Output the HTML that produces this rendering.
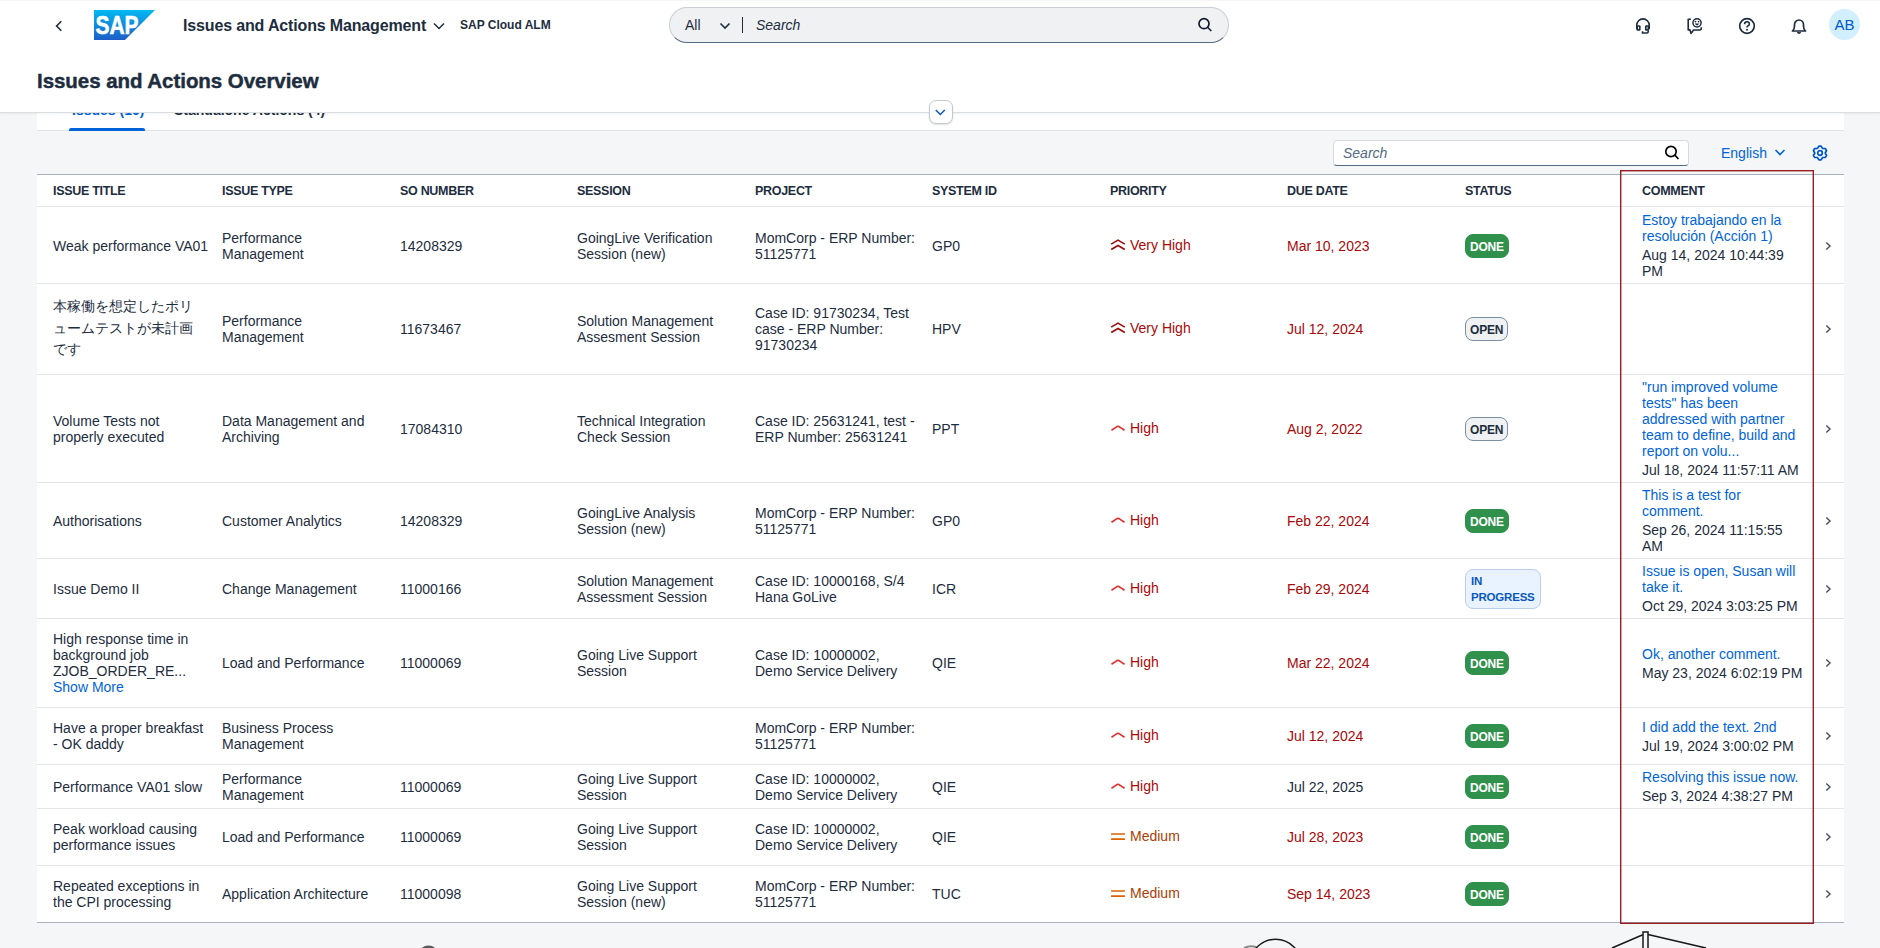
<!DOCTYPE html>
<html><head><meta charset="utf-8">
<style>
*{box-sizing:border-box;margin:0;padding:0}
html,body{width:1880px;height:948px;overflow:hidden}
body{background:#f5f6f7;font-family:"Liberation Sans",sans-serif;color:#1d2d3e;position:relative;font-size:14px}
.abs{position:absolute}
/* shell header */
#hdr{position:absolute;left:0;top:0;width:1880px;height:113px;background:#fff;box-shadow:0 1px 2px rgba(0,0,0,.06);z-index:5;border-bottom:1px solid #dcdfe2}
#tabs{position:absolute;left:37px;top:96px;width:1807px;height:35px;background:#fff;border-bottom:1px solid #e2e4e7;z-index:2}
#tabs .tt{position:absolute;top:6px;font-size:14px;font-weight:bold}
#tabs .ul{position:absolute;left:32px;top:32px;width:76px;height:2.5px;background:#0064d9;border-radius:2px 2px 0 0}
#toolbar{position:absolute;left:37px;top:131px;width:1807px;height:43px;background:#f5f6f7}
#table{position:absolute;left:37px;top:174px;width:1807px;height:749px;background:#fff;border-top:1px solid #a8b2bd;border-bottom:1px solid #a8b2bd}
.hrow{position:absolute;left:37px;top:175px;width:1807px;height:32px;border-bottom:1px solid #e5e5e5}
.hc{position:absolute;top:184px;font-size:12.5px;font-weight:bold;line-height:14px;color:#1d2d3e;letter-spacing:-0.3px}
.row{position:absolute;left:37px;width:1807px;border-bottom:1px solid #e5e5e5}
.c{position:absolute;display:flex;align-items:center;white-space:nowrap}
.t{line-height:16px;font-size:14px}
.jp{line-height:21.5px;font-size:13.5px;color:#1d2d3e}
.lk{color:#0064d9}
.dt{margin-top:3px}
.red{color:#aa0808}
.pri{display:flex;align-items:center}
.pri{position:relative;top:-1px}
.pri .pi{margin-right:4px;position:relative;top:-2px}
.pr span{color:#aa0808}
.pm span{color:#a93e00}
.bd{font-weight:bold;font-size:12px;border-radius:8px;padding:0 4px;line-height:22px;height:24px;letter-spacing:-0.2px}
.done{background:#30914c;color:#fff;border:1px solid #30914c;padding-top:1px}
.open{background:#eff1f2;color:#1d2d3e;border:1px solid #788fa6;padding-top:1px}
.prog{background:#e8f3ff;color:#0a58bd;border:1px solid #b9cdec;height:40px;line-height:16px;padding:3px 5px;width:76px;font-size:11.5px}
#redbox{position:absolute;left:1620px;top:170px;width:194px;height:754px;z-index:4}
</style></head>
<body>
<div id="hdr">
  <div class="abs" style="left:0;top:0;width:1880px;height:1px;background:#f6f6f6"></div>
  <svg class="abs" style="left:52px;top:17px" width="14" height="18" viewBox="0 0 14 18"><path d="M9.3 4.2 L4.6 9 L9.3 13.8" fill="none" stroke="#1d2d3e" stroke-width="1.6"/></svg>
  <svg class="abs" style="left:94px;top:10px" width="61" height="30" viewBox="0 0 61 30">
    <defs><linearGradient id="sg" x1="0" y1="0" x2="0" y2="1"><stop offset="0" stop-color="#00b9f2"/><stop offset="1" stop-color="#1e5ec8"/></linearGradient></defs>
    <path d="M0 0 H61 L31 30 H0 Z" fill="url(#sg)"/>
    <text x="1.5" y="24.3" font-family="Liberation Sans" font-weight="bold" font-size="26.5" fill="#fff" stroke="#fff" stroke-width="0.6" textLength="43" lengthAdjust="spacingAndGlyphs">SAP</text>
  </svg>
  <div class="abs" style="left:183px;top:16px;font-size:16px;font-weight:bold;line-height:20px;letter-spacing:-0.15px">Issues and Actions Management</div>
  <svg class="abs" style="left:432px;top:19px" width="14" height="14" viewBox="0 0 14 14"><path d="M2 4.5 L7 9.5 L12 4.5" fill="none" stroke="#1d2d3e" stroke-width="1.5"/></svg>
  <div class="abs" style="left:460px;top:17px;font-size:12px;font-weight:bold;line-height:16px">SAP Cloud ALM</div>
  <!-- search -->
  <div class="abs" style="left:669px;top:7px;width:560px;height:36px;border-radius:18px;background:#eff1f2;border:1px solid #c9ced3;border-bottom:1px solid #556b82"></div>
  <div class="abs" style="left:685px;top:17px;font-size:14px;line-height:16px">All</div>
  <svg class="abs" style="left:718px;top:20px" width="14" height="12" viewBox="0 0 14 12"><path d="M2.5 3.5 L7 8 L11.5 3.5" fill="none" stroke="#1d2d3e" stroke-width="1.6"/></svg>
  <div class="abs" style="left:742px;top:17px;width:1px;height:16px;background:#1d2d3e"></div>
  <div class="abs" style="left:756px;top:17px;font-size:14px;line-height:16px;font-style:italic;color:#1d2d3e">Search</div>
  <svg class="abs" style="left:1196px;top:16px" width="18" height="18" viewBox="0 0 18 18"><circle cx="8" cy="7.7" r="5" fill="none" stroke="#0f1a2b" stroke-width="1.7"/><path d="M11.6 11.3 L15.3 15" stroke="#0f1a2b" stroke-width="1.6"/></svg>
  <!-- right icons -->
  <svg class="abs" style="left:1633px;top:16px" width="20" height="20" viewBox="0 0 20 20"><path d="M3.8 13 V9.1 A6.2 6.2 0 0 1 16.2 9.1 V13" fill="none" stroke="#1d2d3e" stroke-width="1.6"/><rect x="4.2" y="10" width="2.6" height="3.9" rx=".5" fill="none" stroke="#1d2d3e" stroke-width="1.7"/><rect x="12.8" y="10" width="2.6" height="3.9" rx=".5" fill="none" stroke="#1d2d3e" stroke-width="1.7"/><path d="M15.2 14.5 V15.8 Q15.2 17 14 17 H9.5 V15.2" fill="none" stroke="#1d2d3e" stroke-width="1.6"/></svg>
  <svg class="abs" style="left:1684px;top:15px" width="22" height="22" viewBox="0 0 22 22"><path d="M6.9 4.2 H4.2 V14.9 H6 L6.9 18.4 L9.6 15 H16 Q17.4 15 17.4 12.3" fill="none" stroke="#1d2d3e" stroke-width="1.6" stroke-linejoin="round"/><circle cx="13" cy="7.85" r="4.1" fill="none" stroke="#1d2d3e" stroke-width="1.5"/><circle cx="11.5" cy="6.6" r=".85" fill="#1d2d3e"/><circle cx="14.5" cy="6.6" r=".85" fill="#1d2d3e"/><path d="M10.6 8.6 Q13 12.2 15.4 8.6 Z" fill="#1d2d3e"/></svg>
  <svg class="abs" style="left:1736px;top:15px" width="22" height="22" viewBox="0 0 22 22"><circle cx="11" cy="11" r="7.3" fill="none" stroke="#1d2d3e" stroke-width="1.7"/><path d="M8.6 9.2 Q8.6 6.7 11 6.7 Q13.4 6.7 13.4 9 Q13.4 10.4 11.8 11 Q11 11.4 11 12.6" fill="none" stroke="#1d2d3e" stroke-width="1.6"/><circle cx="11" cy="14.8" r="1" fill="#1d2d3e"/></svg>
  <svg class="abs" style="left:1788px;top:15px" width="22" height="22" viewBox="0 0 22 22"><path d="M4.5 16 Q6.5 14.5 6.5 11 V9.5 A4.5 4.5 0 0 1 15.5 9.5 V11 Q15.5 14.5 17.5 16 Z" fill="none" stroke="#1d2d3e" stroke-width="1.7" stroke-linejoin="round"/><path d="M9.3 17.3 Q11 19 12.7 17.3" fill="#1d2d3e" stroke="#1d2d3e" stroke-width="1.5"/></svg>
  <div class="abs" style="left:1829px;top:9px;width:31px;height:31px;border-radius:50%;background:#d1efff;color:#0057d2;font-size:15px;line-height:31px;text-align:center">AB</div>
  <!-- page title -->
  <div class="abs" style="left:37px;top:69px;font-size:20.5px;font-weight:bold;line-height:24px;color:#1d2d3e;-webkit-text-stroke:0.45px #1d2d3e;letter-spacing:-0.05px">Issues and Actions Overview</div>
</div>

<div id="tabs">
  <div class="tt" style="left:35px;color:#0064d9">Issues (10)</div>
  <div class="tt" style="left:137px;color:#1d2d3e">Standalone Actions (4)</div>
  <div class="ul"></div>
</div>
<!-- collapse button -->
<div class="abs" style="left:929px;top:100px;width:24px;height:24px;background:#fff;border:1px solid #c4c9ce;border-radius:7px;box-shadow:0 1px 2px rgba(0,0,0,.12);z-index:6"></div>
<svg class="abs" style="left:933px;top:105px;z-index:7" width="14" height="14" viewBox="0 0 14 14"><path d="M2.8 5 L7.3 9.5 L11.8 5" fill="none" stroke="#0a56c0" stroke-width="1.5"/></svg>

<div id="toolbar">
  <div class="abs" style="left:1296px;top:9px;width:356px;height:26px;background:#fff;border:1px solid #d5dadd;border-bottom:1px solid #556b82;border-radius:4px"></div>
  <div class="abs" style="left:1306px;top:14px;font-size:14px;line-height:16px;font-style:italic;color:#556b82">Search</div>
  <svg class="abs" style="left:1626px;top:13px" width="18" height="18" viewBox="0 0 18 18"><circle cx="8" cy="7.5" r="5.2" fill="none" stroke="#000" stroke-width="1.7"/><path d="M11.8 11.2 L15.5 15" stroke="#000" stroke-width="1.7"/></svg>
  <div class="abs" style="left:1684px;top:14px;font-size:14px;line-height:16px;color:#0064d9">English</div>
  <svg class="abs" style="left:1736px;top:16px" width="14" height="12" viewBox="0 0 14 12"><path d="M2.5 3 L7 7.5 L11.5 3" fill="none" stroke="#0064d9" stroke-width="1.6"/></svg>
  <svg class="abs" style="left:1772.5px;top:11.8px" width="20" height="20" viewBox="0 0 20 20"><path d="M7.40 5.50 L8.90 3.09 L11.10 3.09 L12.60 5.50 L15.44 5.59 L16.54 7.49 L15.20 10.00 L16.54 12.51 L15.44 14.41 L12.60 14.50 L11.10 16.91 L8.90 16.91 L7.40 14.50 L4.56 14.41 L3.46 12.51 L4.80 10.00 L3.46 7.49 L4.56 5.59 Z" fill="none" stroke="#0058c6" stroke-width="1.7" stroke-linejoin="round"/><circle cx="10" cy="10" r="2.3" fill="none" stroke="#0058c6" stroke-width="1.7"/></svg>
</div>

<div id="table"></div>
<div class="hrow"></div>
<div class="hc" style="left:53px">ISSUE TITLE</div>
<div class="hc" style="left:222px">ISSUE TYPE</div>
<div class="hc" style="left:400px">SO NUMBER</div>
<div class="hc" style="left:577px">SESSION</div>
<div class="hc" style="left:755px">PROJECT</div>
<div class="hc" style="left:932px">SYSTEM ID</div>
<div class="hc" style="left:1110px">PRIORITY</div>
<div class="hc" style="left:1287px">DUE DATE</div>
<div class="hc" style="left:1465px">STATUS</div>
<div class="hc" style="left:1642px">COMMENT</div>

<div class="row" style="top:207px;height:77px"></div>
<div class="c " style="left:53px;top:208px;height:76px"><div class="t">Weak performance VA01</div></div>
<div class="c " style="left:222px;top:208px;height:76px"><div class="t">Performance<br>Management</div></div>
<div class="c " style="left:400px;top:208px;height:76px"><div class="t">14208329</div></div>
<div class="c " style="left:577px;top:208px;height:76px"><div class="t">GoingLive Verification<br>Session (new)</div></div>
<div class="c " style="left:755px;top:208px;height:76px"><div class="t">MomCorp - ERP Number:<br>51125771</div></div>
<div class="c " style="left:932px;top:208px;height:76px"><div class="t">GP0</div></div>
<div class="c " style="left:1110px;top:208px;height:76px"><div class="t pr pri"><svg class="pi" width="16" height="16" viewBox="0 0 16 16"><path d="M1.2 9.1 L8 5.1 L14.8 9.1 M1.2 14.5 L8 10.5 L14.8 14.5" fill="none" stroke="#9c0a0a" stroke-width="1.6"/></svg><span>Very High</span></div></div>
<div class="c " style="left:1287px;top:208px;height:76px"><div class="t red">Mar 10, 2023</div></div>
<div class="c " style="left:1465px;top:208px;height:76px"><div class="bd done">DONE</div></div>
<div class="c " style="left:1642px;top:207px;height:76px"><div class="t"><div class="lk">Estoy trabajando en la<br>resolución (Acción 1)</div><div class="dt">Aug 14, 2024 10:44:39<br>PM</div></div></div>
<div class="c " style="left:1823px;top:208px;height:76px"><svg width="10" height="12" viewBox="0 0 10 12"><path d="M3.3 2.4 L7.1 6 L3.3 9.6" fill="none" stroke="#424d59" stroke-width="1.35"/></svg></div>
<div class="row" style="top:283px;height:92px"></div>
<div class="c " style="left:53px;top:283px;height:91px"><div class="jp">本稼働を想定したポリ<br>ュームテストが未計画<br>です</div></div>
<div class="c " style="left:222px;top:283px;height:91px"><div class="t">Performance<br>Management</div></div>
<div class="c " style="left:400px;top:283px;height:91px"><div class="t">11673467</div></div>
<div class="c " style="left:577px;top:283px;height:91px"><div class="t">Solution Management<br>Assesment Session</div></div>
<div class="c " style="left:755px;top:283px;height:91px"><div class="t">Case ID: 91730234, Test<br>case - ERP Number:<br>91730234</div></div>
<div class="c " style="left:932px;top:283px;height:91px"><div class="t">HPV</div></div>
<div class="c " style="left:1110px;top:283px;height:91px"><div class="t pr pri"><svg class="pi" width="16" height="16" viewBox="0 0 16 16"><path d="M1.2 9.1 L8 5.1 L14.8 9.1 M1.2 14.5 L8 10.5 L14.8 14.5" fill="none" stroke="#9c0a0a" stroke-width="1.6"/></svg><span>Very High</span></div></div>
<div class="c " style="left:1287px;top:283px;height:91px"><div class="t red">Jul 12, 2024</div></div>
<div class="c " style="left:1465px;top:283px;height:91px"><div class="bd open">OPEN</div></div>
<div class="c " style="left:1823px;top:283px;height:91px"><svg width="10" height="12" viewBox="0 0 10 12"><path d="M3.3 2.4 L7.1 6 L3.3 9.6" fill="none" stroke="#424d59" stroke-width="1.35"/></svg></div>
<div class="row" style="top:374px;height:109px"></div>
<div class="c " style="left:53px;top:375px;height:108px"><div class="t">Volume Tests not<br>properly executed</div></div>
<div class="c " style="left:222px;top:375px;height:108px"><div class="t">Data Management and<br>Archiving</div></div>
<div class="c " style="left:400px;top:375px;height:108px"><div class="t">17084310</div></div>
<div class="c " style="left:577px;top:375px;height:108px"><div class="t">Technical Integration<br>Check Session</div></div>
<div class="c " style="left:755px;top:375px;height:108px"><div class="t">Case ID: 25631241, test -<br>ERP Number: 25631241</div></div>
<div class="c " style="left:932px;top:375px;height:108px"><div class="t">PPT</div></div>
<div class="c " style="left:1110px;top:375px;height:108px"><div class="t pr pri"><svg class="pi" width="16" height="16" viewBox="0 0 16 16"><path d="M1.5 12.2 L7 8.6 Q8 8 9 8.6 L14.5 12.2" fill="none" stroke="#e0312f" stroke-width="1.7"/></svg><span>High</span></div></div>
<div class="c " style="left:1287px;top:375px;height:108px"><div class="t red">Aug 2, 2022</div></div>
<div class="c " style="left:1465px;top:375px;height:108px"><div class="bd open">OPEN</div></div>
<div class="c " style="left:1642px;top:374px;height:108px"><div class="t"><div class="lk">"run improved volume<br>tests" has been<br>addressed with partner<br>team to define, build and<br>report on volu...</div><div class="dt">Jul 18, 2024 11:57:11 AM</div></div></div>
<div class="c " style="left:1823px;top:375px;height:108px"><svg width="10" height="12" viewBox="0 0 10 12"><path d="M3.3 2.4 L7.1 6 L3.3 9.6" fill="none" stroke="#424d59" stroke-width="1.35"/></svg></div>
<div class="row" style="top:482px;height:77px"></div>
<div class="c " style="left:53px;top:483px;height:76px"><div class="t">Authorisations</div></div>
<div class="c " style="left:222px;top:483px;height:76px"><div class="t">Customer Analytics</div></div>
<div class="c " style="left:400px;top:483px;height:76px"><div class="t">14208329</div></div>
<div class="c " style="left:577px;top:483px;height:76px"><div class="t">GoingLive Analysis<br>Session (new)</div></div>
<div class="c " style="left:755px;top:483px;height:76px"><div class="t">MomCorp - ERP Number:<br>51125771</div></div>
<div class="c " style="left:932px;top:483px;height:76px"><div class="t">GP0</div></div>
<div class="c " style="left:1110px;top:483px;height:76px"><div class="t pr pri"><svg class="pi" width="16" height="16" viewBox="0 0 16 16"><path d="M1.5 12.2 L7 8.6 Q8 8 9 8.6 L14.5 12.2" fill="none" stroke="#e0312f" stroke-width="1.7"/></svg><span>High</span></div></div>
<div class="c " style="left:1287px;top:483px;height:76px"><div class="t red">Feb 22, 2024</div></div>
<div class="c " style="left:1465px;top:483px;height:76px"><div class="bd done">DONE</div></div>
<div class="c " style="left:1642px;top:482px;height:76px"><div class="t"><div class="lk">This is a test for<br>comment.</div><div class="dt">Sep 26, 2024 11:15:55<br>AM</div></div></div>
<div class="c " style="left:1823px;top:483px;height:76px"><svg width="10" height="12" viewBox="0 0 10 12"><path d="M3.3 2.4 L7.1 6 L3.3 9.6" fill="none" stroke="#424d59" stroke-width="1.35"/></svg></div>
<div class="row" style="top:558px;height:61px"></div>
<div class="c " style="left:53px;top:559px;height:60px"><div class="t">Issue Demo II</div></div>
<div class="c " style="left:222px;top:559px;height:60px"><div class="t">Change Management</div></div>
<div class="c " style="left:400px;top:559px;height:60px"><div class="t">11000166</div></div>
<div class="c " style="left:577px;top:559px;height:60px"><div class="t">Solution Management<br>Assessment Session</div></div>
<div class="c " style="left:755px;top:559px;height:60px"><div class="t">Case ID: 10000168, S/4<br>Hana GoLive</div></div>
<div class="c " style="left:932px;top:559px;height:60px"><div class="t">ICR</div></div>
<div class="c " style="left:1110px;top:559px;height:60px"><div class="t pr pri"><svg class="pi" width="16" height="16" viewBox="0 0 16 16"><path d="M1.5 12.2 L7 8.6 Q8 8 9 8.6 L14.5 12.2" fill="none" stroke="#e0312f" stroke-width="1.7"/></svg><span>High</span></div></div>
<div class="c " style="left:1287px;top:559px;height:60px"><div class="t red">Feb 29, 2024</div></div>
<div class="c " style="left:1465px;top:559px;height:60px"><div class="bd prog">IN<br>PROGRESS</div></div>
<div class="c " style="left:1642px;top:558px;height:60px"><div class="t"><div class="lk">Issue is open, Susan will<br>take it.</div><div class="dt">Oct 29, 2024 3:03:25 PM</div></div></div>
<div class="c " style="left:1823px;top:559px;height:60px"><svg width="10" height="12" viewBox="0 0 10 12"><path d="M3.3 2.4 L7.1 6 L3.3 9.6" fill="none" stroke="#424d59" stroke-width="1.35"/></svg></div>
<div class="row" style="top:618px;height:90px"></div>
<div class="c " style="left:53px;top:618px;height:89px"><div class="t">High response time in<br>background job<br>ZJOB_ORDER_RE...<br><span class="lk">Show More</span></div></div>
<div class="c " style="left:222px;top:618px;height:89px"><div class="t">Load and Performance</div></div>
<div class="c " style="left:400px;top:618px;height:89px"><div class="t">11000069</div></div>
<div class="c " style="left:577px;top:618px;height:89px"><div class="t">Going Live Support<br>Session</div></div>
<div class="c " style="left:755px;top:618px;height:89px"><div class="t">Case ID: 10000002,<br>Demo Service Delivery</div></div>
<div class="c " style="left:932px;top:618px;height:89px"><div class="t">QIE</div></div>
<div class="c " style="left:1110px;top:618px;height:89px"><div class="t pr pri"><svg class="pi" width="16" height="16" viewBox="0 0 16 16"><path d="M1.5 12.2 L7 8.6 Q8 8 9 8.6 L14.5 12.2" fill="none" stroke="#e0312f" stroke-width="1.7"/></svg><span>High</span></div></div>
<div class="c " style="left:1287px;top:618px;height:89px"><div class="t red">Mar 22, 2024</div></div>
<div class="c " style="left:1465px;top:618px;height:89px"><div class="bd done">DONE</div></div>
<div class="c " style="left:1642px;top:619px;height:89px"><div class="t"><div class="lk">Ok, another comment.</div><div class="dt">May 23, 2024 6:02:19 PM</div></div></div>
<div class="c " style="left:1823px;top:618px;height:89px"><svg width="10" height="12" viewBox="0 0 10 12"><path d="M3.3 2.4 L7.1 6 L3.3 9.6" fill="none" stroke="#424d59" stroke-width="1.35"/></svg></div>
<div class="row" style="top:707px;height:58px"></div>
<div class="c " style="left:53px;top:707px;height:57px"><div class="t">Have a proper breakfast<br>- OK daddy</div></div>
<div class="c " style="left:222px;top:707px;height:57px"><div class="t">Business Process<br>Management</div></div>
<div class="c " style="left:755px;top:707px;height:57px"><div class="t">MomCorp - ERP Number:<br>51125771</div></div>
<div class="c " style="left:1110px;top:707px;height:57px"><div class="t pr pri"><svg class="pi" width="16" height="16" viewBox="0 0 16 16"><path d="M1.5 12.2 L7 8.6 Q8 8 9 8.6 L14.5 12.2" fill="none" stroke="#e0312f" stroke-width="1.7"/></svg><span>High</span></div></div>
<div class="c " style="left:1287px;top:707px;height:57px"><div class="t red">Jul 12, 2024</div></div>
<div class="c " style="left:1465px;top:707px;height:57px"><div class="bd done">DONE</div></div>
<div class="c " style="left:1642px;top:708px;height:57px"><div class="t"><div class="lk">I did add the text. 2nd</div><div class="dt">Jul 19, 2024 3:00:02 PM</div></div></div>
<div class="c " style="left:1823px;top:707px;height:57px"><svg width="10" height="12" viewBox="0 0 10 12"><path d="M3.3 2.4 L7.1 6 L3.3 9.6" fill="none" stroke="#424d59" stroke-width="1.35"/></svg></div>
<div class="row" style="top:764px;height:45px"></div>
<div class="c " style="left:53px;top:765px;height:44px"><div class="t">Performance VA01 slow</div></div>
<div class="c " style="left:222px;top:765px;height:44px"><div class="t">Performance<br>Management</div></div>
<div class="c " style="left:400px;top:765px;height:44px"><div class="t">11000069</div></div>
<div class="c " style="left:577px;top:765px;height:44px"><div class="t">Going Live Support<br>Session</div></div>
<div class="c " style="left:755px;top:765px;height:44px"><div class="t">Case ID: 10000002,<br>Demo Service Delivery</div></div>
<div class="c " style="left:932px;top:765px;height:44px"><div class="t">QIE</div></div>
<div class="c " style="left:1110px;top:765px;height:44px"><div class="t pr pri"><svg class="pi" width="16" height="16" viewBox="0 0 16 16"><path d="M1.5 12.2 L7 8.6 Q8 8 9 8.6 L14.5 12.2" fill="none" stroke="#e0312f" stroke-width="1.7"/></svg><span>High</span></div></div>
<div class="c " style="left:1287px;top:765px;height:44px"><div class="t ">Jul 22, 2025</div></div>
<div class="c " style="left:1465px;top:765px;height:44px"><div class="bd done">DONE</div></div>
<div class="c " style="left:1642px;top:764px;height:44px"><div class="t"><div class="lk">Resolving this issue now.</div><div class="dt">Sep 3, 2024 4:38:27 PM</div></div></div>
<div class="c " style="left:1823px;top:765px;height:44px"><svg width="10" height="12" viewBox="0 0 10 12"><path d="M3.3 2.4 L7.1 6 L3.3 9.6" fill="none" stroke="#424d59" stroke-width="1.35"/></svg></div>
<div class="row" style="top:808px;height:58px"></div>
<div class="c " style="left:53px;top:808px;height:57px"><div class="t">Peak workload causing<br>performance issues</div></div>
<div class="c " style="left:222px;top:808px;height:57px"><div class="t">Load and Performance</div></div>
<div class="c " style="left:400px;top:808px;height:57px"><div class="t">11000069</div></div>
<div class="c " style="left:577px;top:808px;height:57px"><div class="t">Going Live Support<br>Session</div></div>
<div class="c " style="left:755px;top:808px;height:57px"><div class="t">Case ID: 10000002,<br>Demo Service Delivery</div></div>
<div class="c " style="left:932px;top:808px;height:57px"><div class="t">QIE</div></div>
<div class="c " style="left:1110px;top:808px;height:57px"><div class="t pm pri"><svg class="pi" width="16" height="16" viewBox="0 0 16 16"><path d="M1.1 8 H14.9 M1.1 13.1 H14.9" fill="none" stroke="#dd6100" stroke-width="1.7"/></svg><span>Medium</span></div></div>
<div class="c " style="left:1287px;top:808px;height:57px"><div class="t red">Jul 28, 2023</div></div>
<div class="c " style="left:1465px;top:808px;height:57px"><div class="bd done">DONE</div></div>
<div class="c " style="left:1823px;top:808px;height:57px"><svg width="10" height="12" viewBox="0 0 10 12"><path d="M3.3 2.4 L7.1 6 L3.3 9.6" fill="none" stroke="#424d59" stroke-width="1.35"/></svg></div>
<div class="c " style="left:53px;top:865px;height:57px"><div class="t">Repeated exceptions in<br>the CPI processing</div></div>
<div class="c " style="left:222px;top:865px;height:57px"><div class="t">Application Architecture</div></div>
<div class="c " style="left:400px;top:865px;height:57px"><div class="t">11000098</div></div>
<div class="c " style="left:577px;top:865px;height:57px"><div class="t">Going Live Support<br>Session (new)</div></div>
<div class="c " style="left:755px;top:865px;height:57px"><div class="t">MomCorp - ERP Number:<br>51125771</div></div>
<div class="c " style="left:932px;top:865px;height:57px"><div class="t">TUC</div></div>
<div class="c " style="left:1110px;top:865px;height:57px"><div class="t pm pri"><svg class="pi" width="16" height="16" viewBox="0 0 16 16"><path d="M1.1 8 H14.9 M1.1 13.1 H14.9" fill="none" stroke="#dd6100" stroke-width="1.7"/></svg><span>Medium</span></div></div>
<div class="c " style="left:1287px;top:865px;height:57px"><div class="t red">Sep 14, 2023</div></div>
<div class="c " style="left:1465px;top:865px;height:57px"><div class="bd done">DONE</div></div>
<div class="c " style="left:1823px;top:865px;height:57px"><svg width="10" height="12" viewBox="0 0 10 12"><path d="M3.3 2.4 L7.1 6 L3.3 9.6" fill="none" stroke="#424d59" stroke-width="1.35"/></svg></div>

<svg id="redbox" width="194" height="754" viewBox="0 0 194 754"><rect x="0.7" y="0.7" width="192.6" height="752.6" fill="none" stroke="#9a1b21" stroke-width="1.4"/></svg>

<!-- bottom illustration fragments -->
<svg class="abs" style="left:0;top:923px" width="1880" height="25" viewBox="0 923 1880 25">
  <ellipse cx="428.5" cy="953" rx="9" ry="7.5" fill="#5a5a5a"/>
  <path d="M1244 948 Q1250 945 1256 947" fill="none" stroke="#888" stroke-width="2"/>
  <circle cx="1275.5" cy="964.9" r="25.6" fill="none" stroke="#1a1a1a" stroke-width="1.6"/>
  <path d="M1612 948 L1642.8 934.7 M1648 934.5 L1706 948" fill="none" stroke="#1a1a1a" stroke-width="1.6"/>
  <path d="M1643 948 V932 H1648 V948" fill="none" stroke="#1a1a1a" stroke-width="1.5"/>
</svg>
</body></html>
